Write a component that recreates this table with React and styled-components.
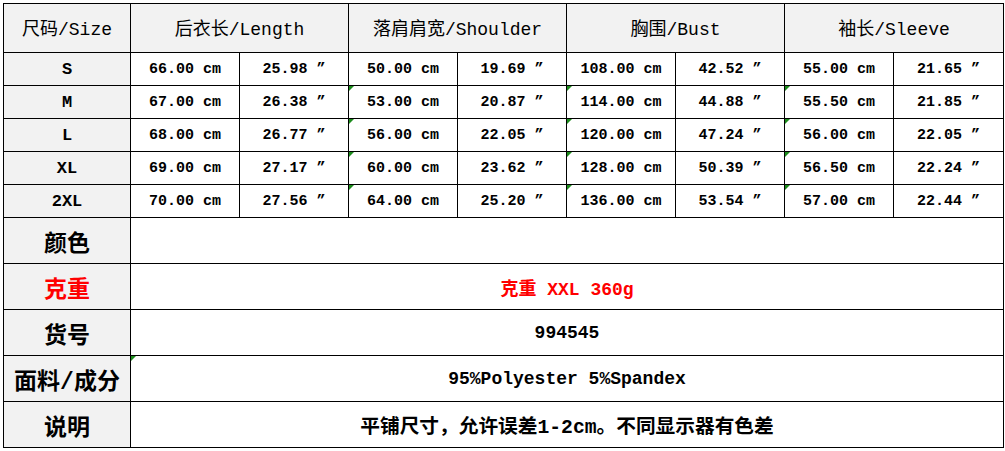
import React from 'react';
import styled, { createGlobalStyle } from 'styled-components';

const GlobalStyle = createGlobalStyle`
  html, body {
    margin: 0;
    padding: 0;
    background: #ffffff;
  }
  body {
    font-family: "Liberation Mono", "Noto Sans CJK SC", monospace;
    color: #000000;
  }
`;

const Sheet = styled.div`
  padding: 3px 0 0 3px;
`;

const Table = styled.table`
  border-collapse: collapse;
  table-layout: fixed;
  width: 1001px;
`;

const HeadRow = styled.tr`
  height: 49px;
`;

const DataRow = styled.tr`
  height: 33px;
`;

const InfoRow = styled.tr`
  height: 46px;
`;

const Cell = styled.td`
  border: 1px solid #000000;
  padding: 0;
  text-align: center;
  vertical-align: middle;
  white-space: nowrap;
  position: relative;
  background: ${(p) => (p.$grey ? '#f2f2f2' : '#ffffff')};

  ${(p) =>
    p.$flag &&
    `
    &::before {
      content: '';
      position: absolute;
      left: 0;
      top: 0;
      width: 0;
      height: 0;
      border-top: 5px solid #1c8c1c;
      border-right: 5px solid transparent;
    }
  `}
`;

const HeadCell = styled(Cell)`
  padding-bottom: 3px;
`;

const HeadText = styled.span`
  font-size: 18px;
  font-weight: 400;
`;

const SizeText = styled.span`
  font-size: 17px;
  font-weight: 700;
`;

const ValueText = styled.span`
  font-size: 15px;
  font-weight: 700;
`;

const LabelText = styled.span`
  font-size: 23px;
  font-weight: 700;
  color: ${(p) => (p.$red ? '#ff0000' : '#000000')};
`;

const InfoText = styled.span`
  font-size: ${(p) => p.$size || 18}px;
  font-weight: 700;
  color: ${(p) => (p.$red ? '#ff0000' : '#000000')};
`;

const widths = [127, 109, 109, 109, 109, 109, 109, 109, 110];

const headers = ['后衣长/Length', '落肩肩宽/Shoulder', '胸围/Bust', '袖长/Sleeve'];

const rows = [
  { size: 'S', v: ['66.00 cm', '25.98 ”', '50.00 cm', '19.69 ”', '108.00 cm', '42.52 ”', '55.00 cm', '21.65 ”'] },
  { size: 'M', v: ['67.00 cm', '26.38 ”', '53.00 cm', '20.87 ”', '114.00 cm', '44.88 ”', '55.50 cm', '21.85 ”'] },
  { size: 'L', v: ['68.00 cm', '26.77 ”', '56.00 cm', '22.05 ”', '120.00 cm', '47.24 ”', '56.00 cm', '22.05 ”'] },
  { size: 'XL', v: ['69.00 cm', '27.17 ”', '60.00 cm', '23.62 ”', '128.00 cm', '50.39 ”', '56.50 cm', '22.24 ”'] },
  { size: '2XL', v: ['70.00 cm', '27.56 ”', '64.00 cm', '25.20 ”', '136.00 cm', '53.54 ”', '57.00 cm', '22.44 ”'] },
];

const info = [
  { label: '颜色', text: '' },
  { label: '克重', text: '克重 XXL 360g', red: true },
  { label: '货号', text: '994545' },
  { label: '面料/成分', text: '95%Polyester 5%Spandex', flag: true },
  { label: '说明', text: '平铺尺寸，允许误差1-2cm。不同显示器有色差', size: 19.7 },
];

export default function App() {
  return (
    <>
      <GlobalStyle />
      <Sheet>
        <Table>
          <colgroup>
            {widths.map((w, i) => (
              <col key={i} style={{ width: w }} />
            ))}
          </colgroup>
          <tbody>
            <HeadRow>
              <HeadCell $grey>
                <HeadText>尺码/Size</HeadText>
              </HeadCell>
              {headers.map((h) => (
                <HeadCell $grey colSpan={2} key={h}>
                  <HeadText>{h}</HeadText>
                </HeadCell>
              ))}
            </HeadRow>
            {rows.map((r, ri) => (
              <DataRow key={r.size}>
                <Cell $grey>
                  <SizeText>{r.size}</SizeText>
                </Cell>
                {r.v.map((val, i) => (
                  <Cell key={i} $flag={ri > 0 && (i === 2 || i === 4 || i === 6)}>
                    <ValueText>{val}</ValueText>
                  </Cell>
                ))}
              </DataRow>
            ))}
            {info.map((row) => (
              <InfoRow key={row.label}>
                <Cell $grey>
                  <LabelText $red={row.red}>{row.label}</LabelText>
                </Cell>
                <Cell colSpan={8} $flag={row.flag}>
                  <InfoText $red={row.red} $size={row.size}>
                    {row.text}
                  </InfoText>
                </Cell>
              </InfoRow>
            ))}
          </tbody>
        </Table>
      </Sheet>
    </>
  );
}
